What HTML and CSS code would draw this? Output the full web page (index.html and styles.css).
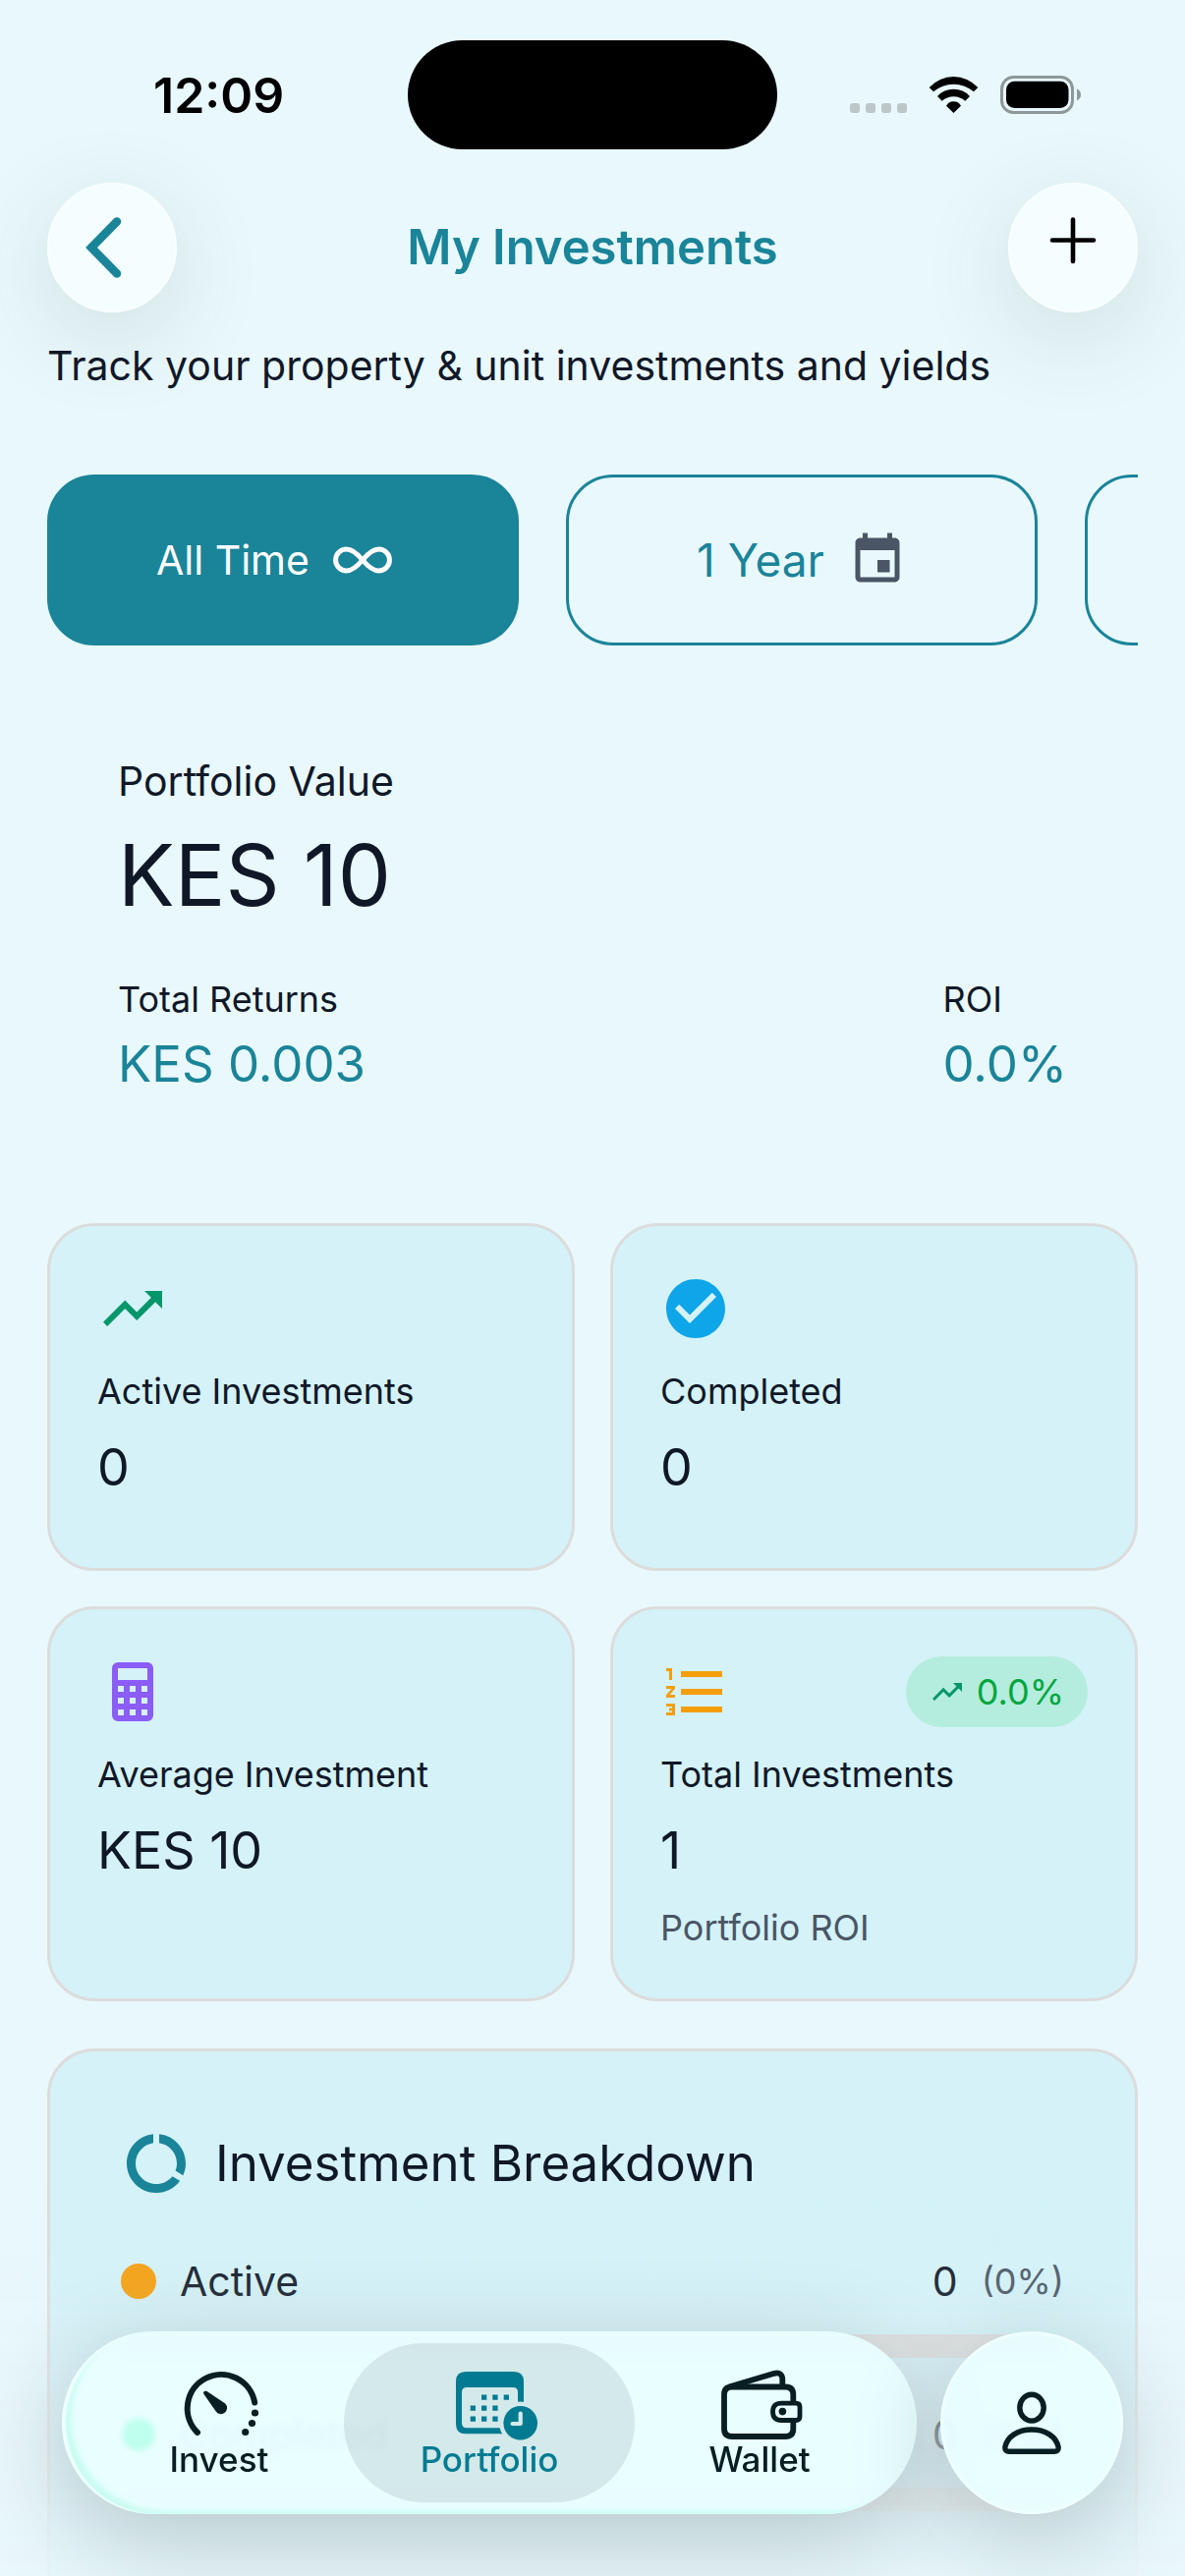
FILE: index.html
```html
<!DOCTYPE html>
<html lang="en">
<head>
    <meta charset="UTF-8">
    <meta name="viewport" content="width=device-width, initial-scale=1.0">
    <title>My Investments</title>
    <link rel="stylesheet" href="styles.css">
</head>
<body>
    <div class="screen">
        <div class="status-bar">
            <span class="time">12:09</span>
            <span class="island"></span>
            <div class="status-icons">
                <svg width="58" height="40" viewBox="0 0 58 40" fill="#bcc7c9">
                    <rect x="0" y="28" width="10" height="10" rx="3"/>
                    <rect x="16" y="28" width="10" height="10" rx="3"/>
                    <rect x="32" y="28" width="10" height="10" rx="3"/>
                    <rect x="48" y="28" width="10" height="10" rx="3"/>
                </svg>
                <svg width="51" height="40" viewBox="0 0 51 40">
                    <path d="M.7 12A33.5 33.5 0 0 1 50.3 12L46 16.3A31.4 31.4 0 0 0 5 16.3ZM9 21A22.3 22.3 0 0 1 42 21L37.3 25.7A17.6 17.6 0 0 0 13.7 25.7ZM18 30.7A8.6 8.6 0 0 1 33 30.7L25.5 38Z"/>
                </svg>
                <svg width="83" height="40" viewBox="0 0 83 40">
                    <rect x="1.5" y="1.5" width="72" height="36" rx="12" fill="none" stroke="#8f9899" stroke-width="3"/>
                    <rect x="6" y="5.7" width="63.5" height="27.3" rx="8.5"/>
                    <path d="M78 13.5Q82 15.5 82 19.4T78 25.3Z" fill="#8f9899"/>
                </svg>
            </div>
        </div>

        <header class="header">
            <button class="round-btn" type="button" aria-label="Back">
                <svg width="54" height="62" viewBox="0 0 54 62" fill="none" stroke="#1a8499" stroke-width="8.5" stroke-linecap="round" stroke-linejoin="miter">
                    <path d="M32 4.5L6 31L32 57.5"/>
                </svg>
            </button>
            <h1>My Investments</h1>
            <button class="round-btn" type="button" aria-label="Add investment">
                <svg width="48" height="62" viewBox="0 0 48 62" fill="none" stroke="#000" stroke-width="4.6" stroke-linecap="round">
                    <path d="M24 2.5V45M3 23.5H45"/>
                </svg>
            </button>
        </header>

        <main>
            <p class="intro">Track your property &amp; unit investments and yields</p>

            <div class="chips">
                <button class="chip active" type="button">
                    All Time
                    <svg width="60" height="60" viewBox="0 0 24 24" fill="none" stroke="currentColor" stroke-width="2"><path d="M12 12C10 9.600 8 7.620 5.400 7.620A4.380 4.380 0 0 0 5.400 16.380C8 16.380 10 14.400 12 12S16 7.620 18.600 7.620A4.380 4.380 0 0 1 18.600 16.380C16 16.380 14 14.400 12 12Z"/></svg>
                </button>
                <button class="chip" type="button">
                    1 Year
                    <svg width="60" height="60" viewBox="0 0 24 24" fill="#4a5565"><path d="M17 12h-5v5h5v-5zM16 1v2H8V1H6v2H5c-1.11 0-1.99.9-1.99 2L3 19c0 1.1.89 2 2 2h14c1.1 0 2-.9 2-2V5c0-1.1-.9-2-2-2h-1V1h-2zm3 18H5V8h14v11z"/></svg>
                </button>
                <button class="chip" type="button" aria-label="More ranges"></button>
            </div>

            <section class="portfolio">
                <p class="portfolio-label">Portfolio Value</p>
                <p class="portfolio-value">KES 10</p>
                <div class="portfolio-row">
                    <div>
                        <p class="small-label">Total Returns</p>
                        <p class="return-value">KES 0.003</p>
                    </div>
                    <div>
                        <p class="small-label">ROI</p>
                        <p class="return-value">0.0%</p>
                    </div>
                </div>
            </section>

            <section class="stats">
                <div class="card stat">
                    <div class="stat-top">
                        <svg width="72" height="72" viewBox="0 0 24 24" fill="#059669"><path d="M16 6l2.29 2.29-4.88 4.88-4-4L2 16.59 3.41 18l6-6 4 4 6.3-6.29L22 12V6z"/></svg>
                    </div>
                    <p class="small-label">Active Investments</p>
                    <p class="stat-value">0</p>
                </div>
                <div class="card stat">
                    <div class="stat-top">
                        <svg width="72" height="72" viewBox="0 0 24 24" fill="#0ea5e9"><path d="M12 2C6.48 2 2 6.48 2 12s4.480 10 10 10 10-4.480 10-10S17.520 2 12 2zm-2 15l-5-5 1.410-1.410L10 14.170l7.590-7.590L19 8l-9 9z"/></svg>
                    </div>
                    <p class="small-label">Completed</p>
                    <p class="stat-value">0</p>
                </div>
                <div class="card stat">
                    <div class="stat-top">
                        <svg width="72" height="72" viewBox="0 0 24 24" fill="#8b5cf6"><path fill-rule="evenodd" d="M7 2H17A2 2 0 0 1 19 4V20A2 2 0 0 1 17 22H7A2 2 0 0 1 5 20V4A2 2 0 0 1 7 2ZM7 4V8H17V4ZM7 10V12H9V10ZM11 10V12H13V10ZM15 10V12H17V10ZM7 14V16H9V14ZM11 14V16H13V14ZM15 14V16H17V14ZM7 18V20H9V18ZM11 18V20H13V18ZM15 18V20H17V18Z"/></svg>
                    </div>
                    <p class="small-label">Average Investment</p>
                    <p class="stat-value">KES 10</p>
                </div>
                <div class="card stat">
                    <div class="stat-top">
                        <svg width="72" height="72" viewBox="0 0 24 24" fill="#f59e0b"><path d="M2 17h2v.5H3v1h1v.5H2v1h3v-4H2v1zm1-9h1V4H2v1h1v3zm-1 3h1.800L2 13.100v.900h3v-1H3.200L5 10.900V10H2v1zm5-6v2h14V5H7zm0 14h14v-2H7v2zm0-6h14v-2H7v2z"/></svg>
                        <span class="badge">
                            <svg width="36" height="36" viewBox="0 0 24 24" fill="#059669"><path d="M16 6l2.29 2.29-4.88 4.88-4-4L2 16.59 3.41 18l6-6 4 4 6.3-6.29L22 12V6z"/></svg>
                            0.0%
                        </span>
                    </div>
                    <p class="small-label">Total Investments</p>
                    <p class="stat-value">1</p>
                    <p class="small-label muted">Portfolio ROI</p>
                </div>
            </section>

            <section class="card breakdown">
                <h2>
                    <svg width="72" height="72" viewBox="0 0 24 24" fill="#1a8499"><path d="M13 2.050v3.030c3.390.490 6 3.390 6 6.920 0 .900-.180 1.750-.480 2.540l2.600 1.530c.560-1.240.880-2.620.880-4.070 0-5.180-3.950-9.450-9-9.950zM12 19c-3.870 0-7-3.130-7-7 0-3.530 2.610-6.430 6-6.920V2.050c-5.060.500-9 4.760-9 9.950 0 5.520 4.470 10 9.990 10 3.310 0 6.240-1.610 8.060-4.090l-2.600-1.530C16.170 17.980 14.210 19 12 19z"/></svg>
                    Investment Breakdown
                </h2>
                <div class="breakdown-item">
                    <div class="breakdown-row">
                        <span class="dot dot-active"></span>
                        <span class="name">Active</span>
                        <span>0</span>
                        <span class="percent">(0%)</span>
                    </div>
                    <div class="track"></div>
                </div>
                <div class="breakdown-item">
                    <div class="breakdown-row">
                        <span class="dot dot-completed"></span>
                        <span class="name">Completed</span>
                        <span>0</span>
                        <span class="percent">(0%)</span>
                    </div>
                    <div class="track"></div>
                </div>
            </section>
        </main>
    </div>

    <div class="fade"></div>

    <nav class="bottom-nav">
        <div class="tabs">
            <a class="tab" href="#invest">
                <svg width="96" height="76" viewBox="0 0 96 76" fill="none" stroke="currentColor" stroke-width="6" stroke-linecap="round">
                    <path d="M26 67A34.5 34.5 0 1 1 84.2 36.500"/>
                    <g fill="currentColor" stroke="none">
                        <circle cx="84.500" cy="47" r="3.600"/>
                        <circle cx="81.500" cy="57.500" r="3.600"/>
                        <circle cx="74.700" cy="66.500" r="3.600"/>
                        <path d="M35.200 24.800L54.300 37.600A6.200 6.200 0 1 1 44.600 45.200L32.200 27.500Q31.500 24 35.200 24.800Z"/>
                    </g>
                </svg>
                Invest
            </a>
            <a class="tab current" href="#portfolio" aria-current="page">
                <svg width="96" height="76" viewBox="0 0 96 76" fill="currentColor" overflow="visible">
                    <mask id="clockCut">
                        <rect width="96" height="76" fill="#fff"/>
                        <circle cx="79.700" cy="57.300" r="21.700" fill="#000"/>
                    </mask>
                    <g mask="url(#clockCut)">
                        <path fill-rule="evenodd" d="M24 5H73Q83 5 83 15V58.300Q83 68.300 73 68.300H24Q14 68.300 14 58.300V15Q14 5 24 5ZM25 21Q20 21 20 26V57.300Q20 62.300 25 62.300H72Q77 62.300 77 57.300V26Q77 21 72 21Z"/>
                        <path d="M40 28.500h5.300v5.300H40zM51.300 28.500h5.300v5.300h-5.300zM62.700 28.500H68v5.300h-5.300zM28.700 39.500H34v5.300h-5.300zM40 39.500h5.300v5.300H40zM51.300 39.500h5.300v5.300h-5.300zM28.700 50.500H34v5.300h-5.300zM40 50.500h5.300v5.300H40zM51.300 50.500h5.300v5.300h-5.300z"/>
                    </g>
                    <circle cx="79.700" cy="57.300" r="17.300"/>
                    <path d="M79.700 47.500V58H71.500" fill="none" stroke="#d4ebed" stroke-width="4.200" stroke-linecap="round" stroke-linejoin="round"/>
                </svg>
                Portfolio
            </a>
            <a class="tab" href="#wallet">
                <svg width="96" height="76" viewBox="0 0 96 76" fill="none" stroke="currentColor" stroke-width="5.800" stroke-linejoin="round">
                    <path d="M17 20.500L63 6.800Q71.300 5 71.300 13V20.500"/>
                    <path d="M82.300 37V28.500Q82.300 20.500 74.300 20.500H20Q12 20.500 12 28.500V63Q12 71 20 71H74.300Q82.300 71 82.300 63V54"/>
                    <path d="M70.500 37.200H85Q89 37.200 89 41V50.500Q89 54.500 85 54.500H70.500Q61.500 54.500 61.500 45.800T70.500 37.200Z" stroke-width="4.800"/>
                    <circle cx="71.400" cy="45.600" r="3.800" fill="currentColor" stroke="none"/>
                </svg>
                Wallet
            </a>
        </div>
        <a class="profile" href="#profile" aria-label="Profile">
            <svg width="72" height="72" viewBox="0 0 72 72" fill="none" stroke="currentColor" stroke-width="5.400" stroke-linejoin="round">
                <ellipse cx="36" cy="20.700" rx="12.200" ry="13.400"/>
                <path d="M13 65.300H59Q63.400 65.300 63.200 61C61 50 50 43 36 43S11 50 8.800 61Q8.600 65.300 13 65.300Z"/>
            </svg>
        </a>
    </nav>
</body>
</html>
```
FILE: styles.css
```css
* {
    box-sizing: border-box;
}
body {
    margin: 0;
    font-family: Inter, "Liberation Sans", sans-serif;
    font-size: 41px;
    line-height: 60px;
    color: #101828;
    background-color: #e9f8fc;
}
h1, h2, p {
    margin: 0;
    font-weight: 400;
}
button {
    font-family: inherit;
    border: 0;
    padding: 0;
    cursor: pointer;
}
a {
    color: inherit;
    text-decoration: none;
}
svg {
    display: block;
    flex: none;
}
.screen {
    height: 100vh;
    overflow-y: auto;
    scrollbar-width: none;
    padding-bottom: 300px;
}

/* Status bar */
.status-bar {
    display: grid;
    grid-template-columns: 1fr 376px 1fr;
    align-items: center;
    padding: 41px 0 34px;
    color: #000;
}
.time {
    padding-left: 156px;
    font-size: 50px;
    font-weight: 600;
}
.island {
    height: 111px;
    border-radius: 56px;
    background: #000;
}
.status-icons {
    display: flex;
    justify-content: flex-end;
    gap: 22px;
    padding-right: 105px;
}

/* Header */
.header {
    display: flex;
    align-items: center;
    justify-content: space-between;
    padding: 0 48px;
}
.header h1 {
    font-size: 49px;
    font-weight: 600;
    color: #1a8499;
}
.round-btn {
    display: flex;
    align-items: center;
    justify-content: center;
    width: 132px;
    height: 132px;
    border: 2px solid #f9ffff;
    border-radius: 50%;
    background: #f4fdff;
    box-shadow: 0 24px 96px rgba(60, 70, 40, 0.14);
}
main {
    padding: 24px 48px 0;
}

/* Range chips */
.chips {
    display: flex;
    gap: 48px;
    margin-top: 81px;
    overflow: hidden;
}
.chip {
    display: flex;
    flex: none;
    align-items: center;
    justify-content: center;
    gap: 24px;
    width: 480px;
    height: 174px;
    border: 3px solid #1a8499;
    border-radius: 48px;
    background: transparent;
    color: #1a8499;
    font-size: 46px;
}
.chip.active {
    padding-right: 18px;
    background: #1a8499;
    color: #fff;
    font-size: 41px;
}

/* Portfolio value */
.portfolio {
    margin: 36px 0 60px;
    padding: 72px;
}
.portfolio-value {
    margin: 12px 0 48px;
    font-size: 86px;
    line-height: 108px;
}
.portfolio-row {
    display: flex;
    justify-content: space-between;
}
.small-label {
    font-size: 36px;
    line-height: 48px;
}
.return-value {
    margin-top: 12px;
    font-size: 51px;
    color: #1a8499;
}

/* Cards */
.card {
    border: 3px solid #dcdcdc;
    border-radius: 48px;
    background: #d4f2f8;
}
.stats {
    display: grid;
    grid-template-columns: 1fr 1fr;
    gap: 36px;
}
.stat {
    padding: 48px;
}
.stat-top {
    display: flex;
    align-items: center;
    justify-content: space-between;
    margin-bottom: 24px;
}
.stat-value {
    margin: 24px 0;
    font-size: 52px;
}
.muted {
    color: #4a5565;
}
.badge {
    display: flex;
    align-items: center;
    gap: 12px;
    height: 72px;
    padding: 0 24px;
    border-radius: 36px;
    background: #b4eddd;
    color: #00a63e;
    font-size: 36px;
}

/* Breakdown */
.breakdown {
    margin-top: 48px;
    padding: 72px 72px 180px;
}
.breakdown h2 {
    display: flex;
    align-items: center;
    gap: 24px;
    font-size: 51px;
    line-height: 84px;
}
.breakdown-item {
    margin-top: 48px;
}
.breakdown-row {
    display: flex;
    align-items: center;
    gap: 24px;
}
.dot {
    width: 36px;
    height: 36px;
    border-radius: 50%;
}
.dot-active {
    background: #f59e0b;
}
.dot-completed {
    background: #10d9a0;
}
.name {
    flex: 1;
}
.percent {
    font-size: 36px;
    color: #4a5565;
}
.track {
    height: 24px;
    margin-top: 24px;
    border-radius: 12px;
    background: #dcdcdc;
}

/* Bottom navigation */
.fade {
    position: fixed;
    left: 0;
    right: 0;
    bottom: 0;
    height: 400px;
    background: linear-gradient(rgba(233, 247, 251, 0), rgba(233, 247, 251, 0.12) 30%, rgba(233, 247, 251, 0.6) 64%, rgba(233, 247, 251, 0.9));
    pointer-events: none;
}
.bottom-nav {
    position: fixed;
    left: 63px;
    right: 63px;
    bottom: 63px;
    display: flex;
    gap: 24px;
    color: #071e22;
}
.tabs, .profile {
    height: 186px;
    border-radius: 93px;
    background-color: rgba(232, 254, 255, 0.93);
    backdrop-filter: blur(3px);
    box-shadow: 0 24px 96px rgba(20, 30, 30, 0.22);
}
.tabs {
    display: flex;
    flex: 1;
    padding: 12px;
    background-image: radial-gradient(circle at 78px 105px, #bfffee 12px, rgba(191, 255, 238, 0) 20px);
    box-shadow: 0 24px 96px rgba(20, 30, 30, 0.22), inset 4px 0 2px #f0ffff, inset 11px -5px 6px -2px #c4fcf0;
}
.tab {
    display: flex;
    flex: 1;
    flex-direction: column;
    align-items: center;
    padding-top: 24px;
    border-radius: 81px;
    font-size: 35px;
    font-weight: 500;
    line-height: 36px;
}
.tab + .tab {
    margin-left: -21px;
}
.tab.current {
    background: rgba(0, 20, 20, 0.09);
    color: #027b92;
}
.profile {
    display: flex;
    align-items: center;
    justify-content: center;
    width: 186px;
    border: 3px solid #effeff;
}
```
